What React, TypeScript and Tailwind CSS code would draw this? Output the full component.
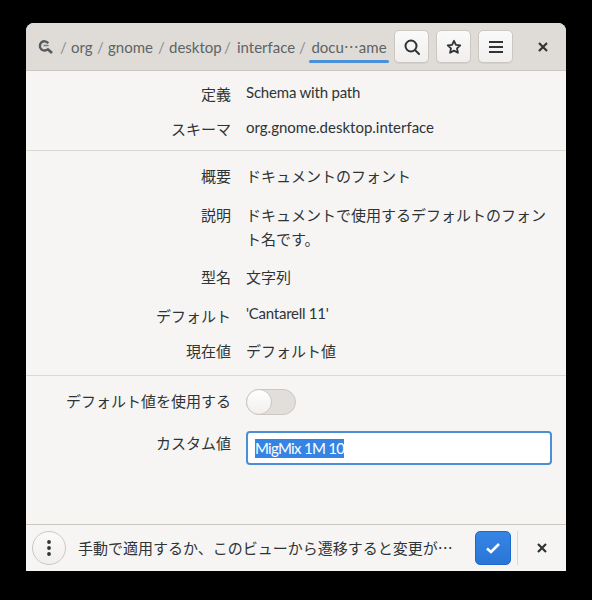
const font = { fontFamily: 'Lato, "Noto Sans CJK JP", sans-serif' }

function Row({ label, children, className }: { label: string; children: React.ReactNode; className?: string }) {
  return (
    <div className={`flex ${className ?? ''}`}>
      <div className="w-[205px] text-right">{label}</div>
      <div className="ml-[15px] w-[306px]">{children}</div>
    </div>
  )
}

function HeaderButton({ children }: { children: React.ReactNode }) {
  return (
    <button className="flex h-[33px] w-[35px] items-center justify-center rounded-[5px] border border-[#cdc7c2] bg-gradient-to-b from-[#fafafa] to-[#f1efed] text-[#2e3436] shadow-[0_1px_0_rgba(0,0,0,0.05)]">
      {children}
    </button>
  )
}

function Crumb({ name, className }: { name: string; className: string }) {
  return (
    <span className="flex items-center">
      <span className="w-[9px] text-center text-[#8b8e8f]">/</span>
      <span className={`ml-[3px] ${className}`}>{name}</span>
    </span>
  )
}

export default function App() {
  return (
    <div className="h-[600px] w-[592px] overflow-hidden bg-black pl-[26px] pt-[23px] text-[15px] leading-[20px] text-[#2e3436]" style={font}>
      <div className="flex h-[548px] w-[540px] flex-col overflow-hidden rounded-t-[8px] bg-[#f6f5f4]">
        <header className="flex h-[48px] shrink-0 items-center border-b border-[#cdc7c2] bg-[#dfdcd8] pl-[11px]">
          <svg width="18" height="16" viewBox="0 0 18 16" className="shrink-0 text-[#555b5e]">
            <path d="M11.2 4.2A4.6 4.6 0 1 0 11.2 9.6" fill="none" stroke="currentColor" strokeWidth="2.4" />
            <path d="M6.5 6.5h5" stroke="currentColor" strokeWidth="1.6" opacity="0.7" />
            <path d="M10.5 10l4.5 4" stroke="currentColor" strokeWidth="2.6" />
          </svg>
          <div className="ml-[4px] flex w-[330px] shrink-0 items-center text-[#5e6365]">
            <Crumb name="org" className="w-[25px]" />
            <Crumb name="gnome" className="w-[49px]" />
            <Crumb name="desktop" className="w-[54px]" />
            <Crumb name="interface" className="w-[63px] pl-[2px]" />
            <span className="w-[9px] text-center text-[#8b8e8f]">/</span>
            <span className="relative ml-[2px] flex h-[47px] w-[80px] items-center justify-center">
              docu<span style={{ fontFamily: '"Noto Sans CJK JP"' }}>⋯</span>ame
              <span className="absolute bottom-[7px] left-0 right-0 h-[3px] rounded-full bg-[#4a90d9]" />
            </span>
          </div>
          <div className="ml-[5px] flex shrink-0 items-center gap-[7px]">
            <HeaderButton>
              <svg width="18" height="18" viewBox="0 0 18 18" fill="none" stroke="currentColor" strokeWidth="2">
                <circle cx="8" cy="8" r="5.5" />
                <path d="M12 12l4 4" strokeLinecap="round" />
              </svg>
            </HeaderButton>
            <HeaderButton>
              <svg width="16" height="16" viewBox="0 0 16 16" fill="none" stroke="currentColor" strokeWidth="1.8" strokeLinejoin="round">
                <path d="M8 1.8l1.9 4.1 4.4.5-3.3 3 .9 4.4L8 11.6l-3.9 2.2.9-4.4-3.3-3 4.4-.5z" />
              </svg>
            </HeaderButton>
            <HeaderButton>
              <svg width="16" height="14" viewBox="0 0 16 14" fill="currentColor">
                <rect x="1" y="1" width="14" height="2" />
                <rect x="1" y="6" width="14" height="2" />
                <rect x="1" y="11" width="14" height="2" />
              </svg>
            </HeaderButton>
          </div>
          <button className="ml-[25px] flex shrink-0 items-center justify-center text-[#2e3436]">
            <svg width="10" height="10" viewBox="0 0 10 10" stroke="currentColor" strokeWidth="2.2">
              <path d="M1 1l8 8M9 1l-8 8" />
            </svg>
          </button>
        </header>

        <main className="flex flex-1 flex-col">
          <div className="flex flex-col gap-[15px] border-b border-[#dcd9d5] pb-[11px] pt-[13px]">
            <Row label="定義"><div className="-mt-[2px] tracking-[-0.2px]">Schema with path</div></Row>
            <Row label="スキーマ"><div className="-mt-[2px]">org.gnome.desktop.interface</div></Row>
          </div>
          <div className="flex flex-col border-b border-[#dcd9d5] pb-[14px] pt-[15px]">
            <Row label="概要" className="mb-[19px]">ドキュメントのフォント</Row>
            <Row label="説明" className="mb-[16px]">
              <div className="-mt-[2px] leading-[24px]">ドキュメントで使用するデフォルトのフォント名です。</div>
            </Row>
            <Row label="型名" className="mb-[19px]">文字列</Row>
            <Row label="デフォルト" className="mb-[15px]"><div className="-mt-[3px] tracking-[-0.25px]">'Cantarell 11'</div></Row>
            <Row label="現在値">デフォルト値</Row>
          </div>
          <div className="flex items-center pt-[13px]">
            <div className="-mt-[2px] w-[205px] text-right">デフォルト値を使用する</div>
            <div className="ml-[15px] flex h-[26px] w-[50px] items-center rounded-full border border-[#cdc7c2] bg-[#e1dedb]">
              <span className="-ml-px h-[26px] w-[26px] rounded-full border border-[#cdc7c2] bg-gradient-to-b from-white to-[#f1efed]" />
            </div>
          </div>
          <div className="mt-[16px] flex items-start">
            <div className="mt-[2px] w-[205px] text-right">カスタム値</div>
            <div className="ml-[15px] flex h-[34px] w-[306px] items-center rounded-[4px] border-2 border-[#4a90d9] bg-white pl-[7px]">
              <span className="bg-[#3584e4] leading-[19px] tracking-[-0.7px] text-white">MigMix 1M 10</span>
            </div>
          </div>
        </main>

        <footer className="flex h-[47px] shrink-0 items-center border-t border-[#cdc7c2] bg-[#f6f5f4] pl-[6px]">
          <button className="flex h-[34px] w-[34px] shrink-0 items-center justify-center rounded-full border border-[#cdc7c2] bg-gradient-to-b from-[#fafafa] to-[#f1efed]">
            <svg width="4" height="16" viewBox="0 0 4 16" fill="currentColor">
              <circle cx="2" cy="2" r="1.9" />
              <circle cx="2" cy="8" r="1.9" />
              <circle cx="2" cy="14" r="1.9" />
            </svg>
          </button>
          <div className="ml-[12px] w-[397px] shrink-0 whitespace-nowrap">手動で適用するか、このビューから遷移すると変更が⋯</div>
          <button className="flex h-[34px] w-[36px] shrink-0 items-center justify-center rounded-[5px] border border-[#1b6acb] bg-gradient-to-b from-[#3584e4] to-[#2a76d6]">
            <svg width="16" height="12" viewBox="0 0 16 12" fill="none" stroke="white" strokeWidth="2.6">
              <path d="M2 6.5l4 3.5 8-8" />
            </svg>
          </button>
          <span className="ml-[6px] h-[34px] w-px shrink-0 bg-[#dcd9d5]" />
          <button className="ml-[19px] flex shrink-0 items-center justify-center">
            <svg width="10" height="10" viewBox="0 0 10 10" stroke="currentColor" strokeWidth="2.2">
              <path d="M1 1l8 8M9 1l-8 8" />
            </svg>
          </button>
        </footer>
      </div>
    </div>
  )
}
